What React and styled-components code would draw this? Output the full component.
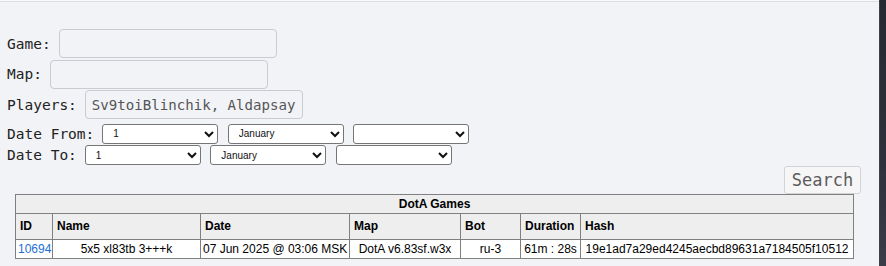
import React from 'react';
import styled, { createGlobalStyle } from 'styled-components';

const GlobalStyle = createGlobalStyle`
  html, body {
    margin: 0;
    padding: 0;
    background: #f2f3f7;
  }
`

const days = Array.from({ length: 31 }, (_, i) => i + 1);
const months = ['January', 'February', 'March', 'April', 'May', 'June', 'July',
  'August', 'September', 'October', 'November', 'December'];

const columns = [
  { title: 'ID', width: 37 },
  { title: 'Name', width: 148 },
  { title: 'Date', width: 149 },
  { title: 'Map', width: 111 },
  { title: 'Bot', width: 60 },
  { title: 'Duration', width: 60 },
  { title: 'Hash', width: 273 },
];

const games = [
  {
    id: '10694',
    name: '5x5 xl83tb 3+++k',
    date: '07 Jun 2025 @ 03:06 MSK',
    map: 'DotA v6.83sf.w3x',
    bot: 'ru-3',
    duration: '61m : 28s',
    hash: '19e1ad7a29ed4245aecbd89631a7184505f10512',
  },
];

function DateSelects() {
  return (
    <>
      <Select width={116} defaultValue="1">
        {days.map(d => <option key={d} value={d}>{d}</option>)}
      </Select>
      <Select width={116} defaultValue="January">
        {months.map(m => <option key={m}>{m}</option>)}
      </Select>
      <Select width={116} defaultValue="">
        <option value=""></option>
        <option>2025</option>
        <option>2024</option>
      </Select>
    </>
  );
}

export default function App() {
  return (
    <Page>
      <GlobalStyle />
      <Main>
        <FieldRow>
          <Label>Game:</Label>
          <TextInput type="text" />
        </FieldRow>
        <FieldRow>
          <Label>Map:</Label>
          <TextInput type="text" />
        </FieldRow>
        <FieldRow>
          <Label>Players:</Label>
          <TextInput type="text" defaultValue="Sv9toiBlinchik, Aldapsay" />
        </FieldRow>
        <DateRow top={3}>
          <Label>Date From:</Label>
          <DateSelects />
        </DateRow>
        <DateRow top={1.5}>
          <Label>Date To:</Label>
          <DateSelects />
        </DateRow>
        <ButtonBar>
          <SearchButton>Search</SearchButton>
        </ButtonBar>
        <Table>
          <colgroup>
            {columns.map(c => <col key={c.title} style={{ width: c.width }} />)}
          </colgroup>
          <thead>
            <tr>
              <Caption colSpan={columns.length}>DotA Games</Caption>
            </tr>
            <tr>
              {columns.map(c => <HeadCell key={c.title}>{c.title}</HeadCell>)}
            </tr>
          </thead>
          <tbody>
            {games.map(g => (
              <tr key={g.id}>
                <Cell align="left"><GameLink href="#">{g.id}</GameLink></Cell>
                <Cell>{g.name}</Cell>
                <Cell>{g.date}</Cell>
                <Cell>{g.map}</Cell>
                <Cell>{g.bot}</Cell>
                <Cell>{g.duration}</Cell>
                <Cell>{g.hash}</Cell>
              </tr>
            ))}
          </tbody>
        </Table>
      </Main>
      <EdgeStrip />
    </Page>
  );
}

const Page = styled.div`
  display: flex;
  width: 886px;
  height: 266px;
  overflow: hidden;
  background: #f8f9fb;
  padding-top: 1px;
  box-sizing: border-box;
`

const Main = styled.div`
  flex: 1;
  display: flex;
  flex-direction: column;
  align-items: flex-start;
  padding: 27px 18px 0 7px;
  border-top: 1px solid #dcdee2;
  background: #f2f3f7;
  font-family: "DejaVu Sans Mono", monospace;
`

const EdgeStrip = styled.div`
  width: 6px;
  flex: none;
  margin-top: -1px;
  background: linear-gradient(180deg, #262932 0%, #2e313b 60%, #3a3d47 100%);
  border-left: 1px solid #3c404a;
`

const FieldRow = styled.div`
  display: flex;
  align-items: center;
  margin-bottom: 1.5px;
`

const DateRow = styled.div`
  display: flex;
  align-items: center;
  gap: 9.5px;
  margin-top: ${p => p.top}px;
`

const Label = styled.span`
  font-size: 14.5px;
  color: #222;
  margin-right: 8px;
  white-space: pre;
  ${DateRow} & {
    margin-right: -1.5px;
  }
`

const TextInput = styled.input`
  box-sizing: border-box;
  width: 218px;
  height: 29px;
  padding: 0 4px 0 6px;
  border: 1px solid #c9cbd0;
  border-radius: 4px;
  background: transparent;
  font-family: "DejaVu Sans Mono", monospace;
  font-size: 14.1px;
  color: #555;
  outline: none;
`

const Select = styled.select`
  box-sizing: border-box;
  width: ${p => p.width}px;
  height: 20px;
  padding: 0 2px 0 6px;
  font-family: "Liberation Sans", Arial, sans-serif;
  font-size: 10px;
  color: #111;
  background: #fff;
  border: 1px solid #767676;
  border-radius: 3px;
`

const ButtonBar = styled.div`
  align-self: stretch;
  display: flex;
  justify-content: flex-end;
  margin-top: 0.5px;
`

const SearchButton = styled.button`
  box-sizing: border-box;
  width: 77px;
  height: 28px;
  padding: 0;
  font-family: "DejaVu Sans Mono", monospace;
  font-size: 17px;
  color: #5c5c5c;
  background: #f6f6f7;
  border: 1px solid #d2d3d6;
  border-radius: 3px;
`

const Table = styled.table`
  margin-left: 8px;
  width: 838px;
  table-layout: fixed;
  border-collapse: collapse;
  border: 1px solid #808080;
  background: #fff;
  font-family: "Liberation Sans", Arial, sans-serif;
  font-size: 12px;
  color: #000;
`

const Caption = styled.th`
  height: 18px;
  padding: 0;
  text-align: center;
  font-weight: bold;
  background: #eeeeee;
  border: 1px solid #808080;
`

const HeadCell = styled.th`
  height: 25px;
  padding: 0 4px;
  text-align: left;
  font-weight: bold;
  background: #eeeeee;
  border: 1px solid #808080;
  white-space: nowrap;
`

const Cell = styled.td`
  height: 18px;
  padding: 0 2px;
  text-align: ${p => p.align || 'center'};
  border: 1px solid #808080;
  white-space: nowrap;
  overflow: hidden;
`

const GameLink = styled.a`
  color: #1a6fd6;
  text-decoration: none;
`
